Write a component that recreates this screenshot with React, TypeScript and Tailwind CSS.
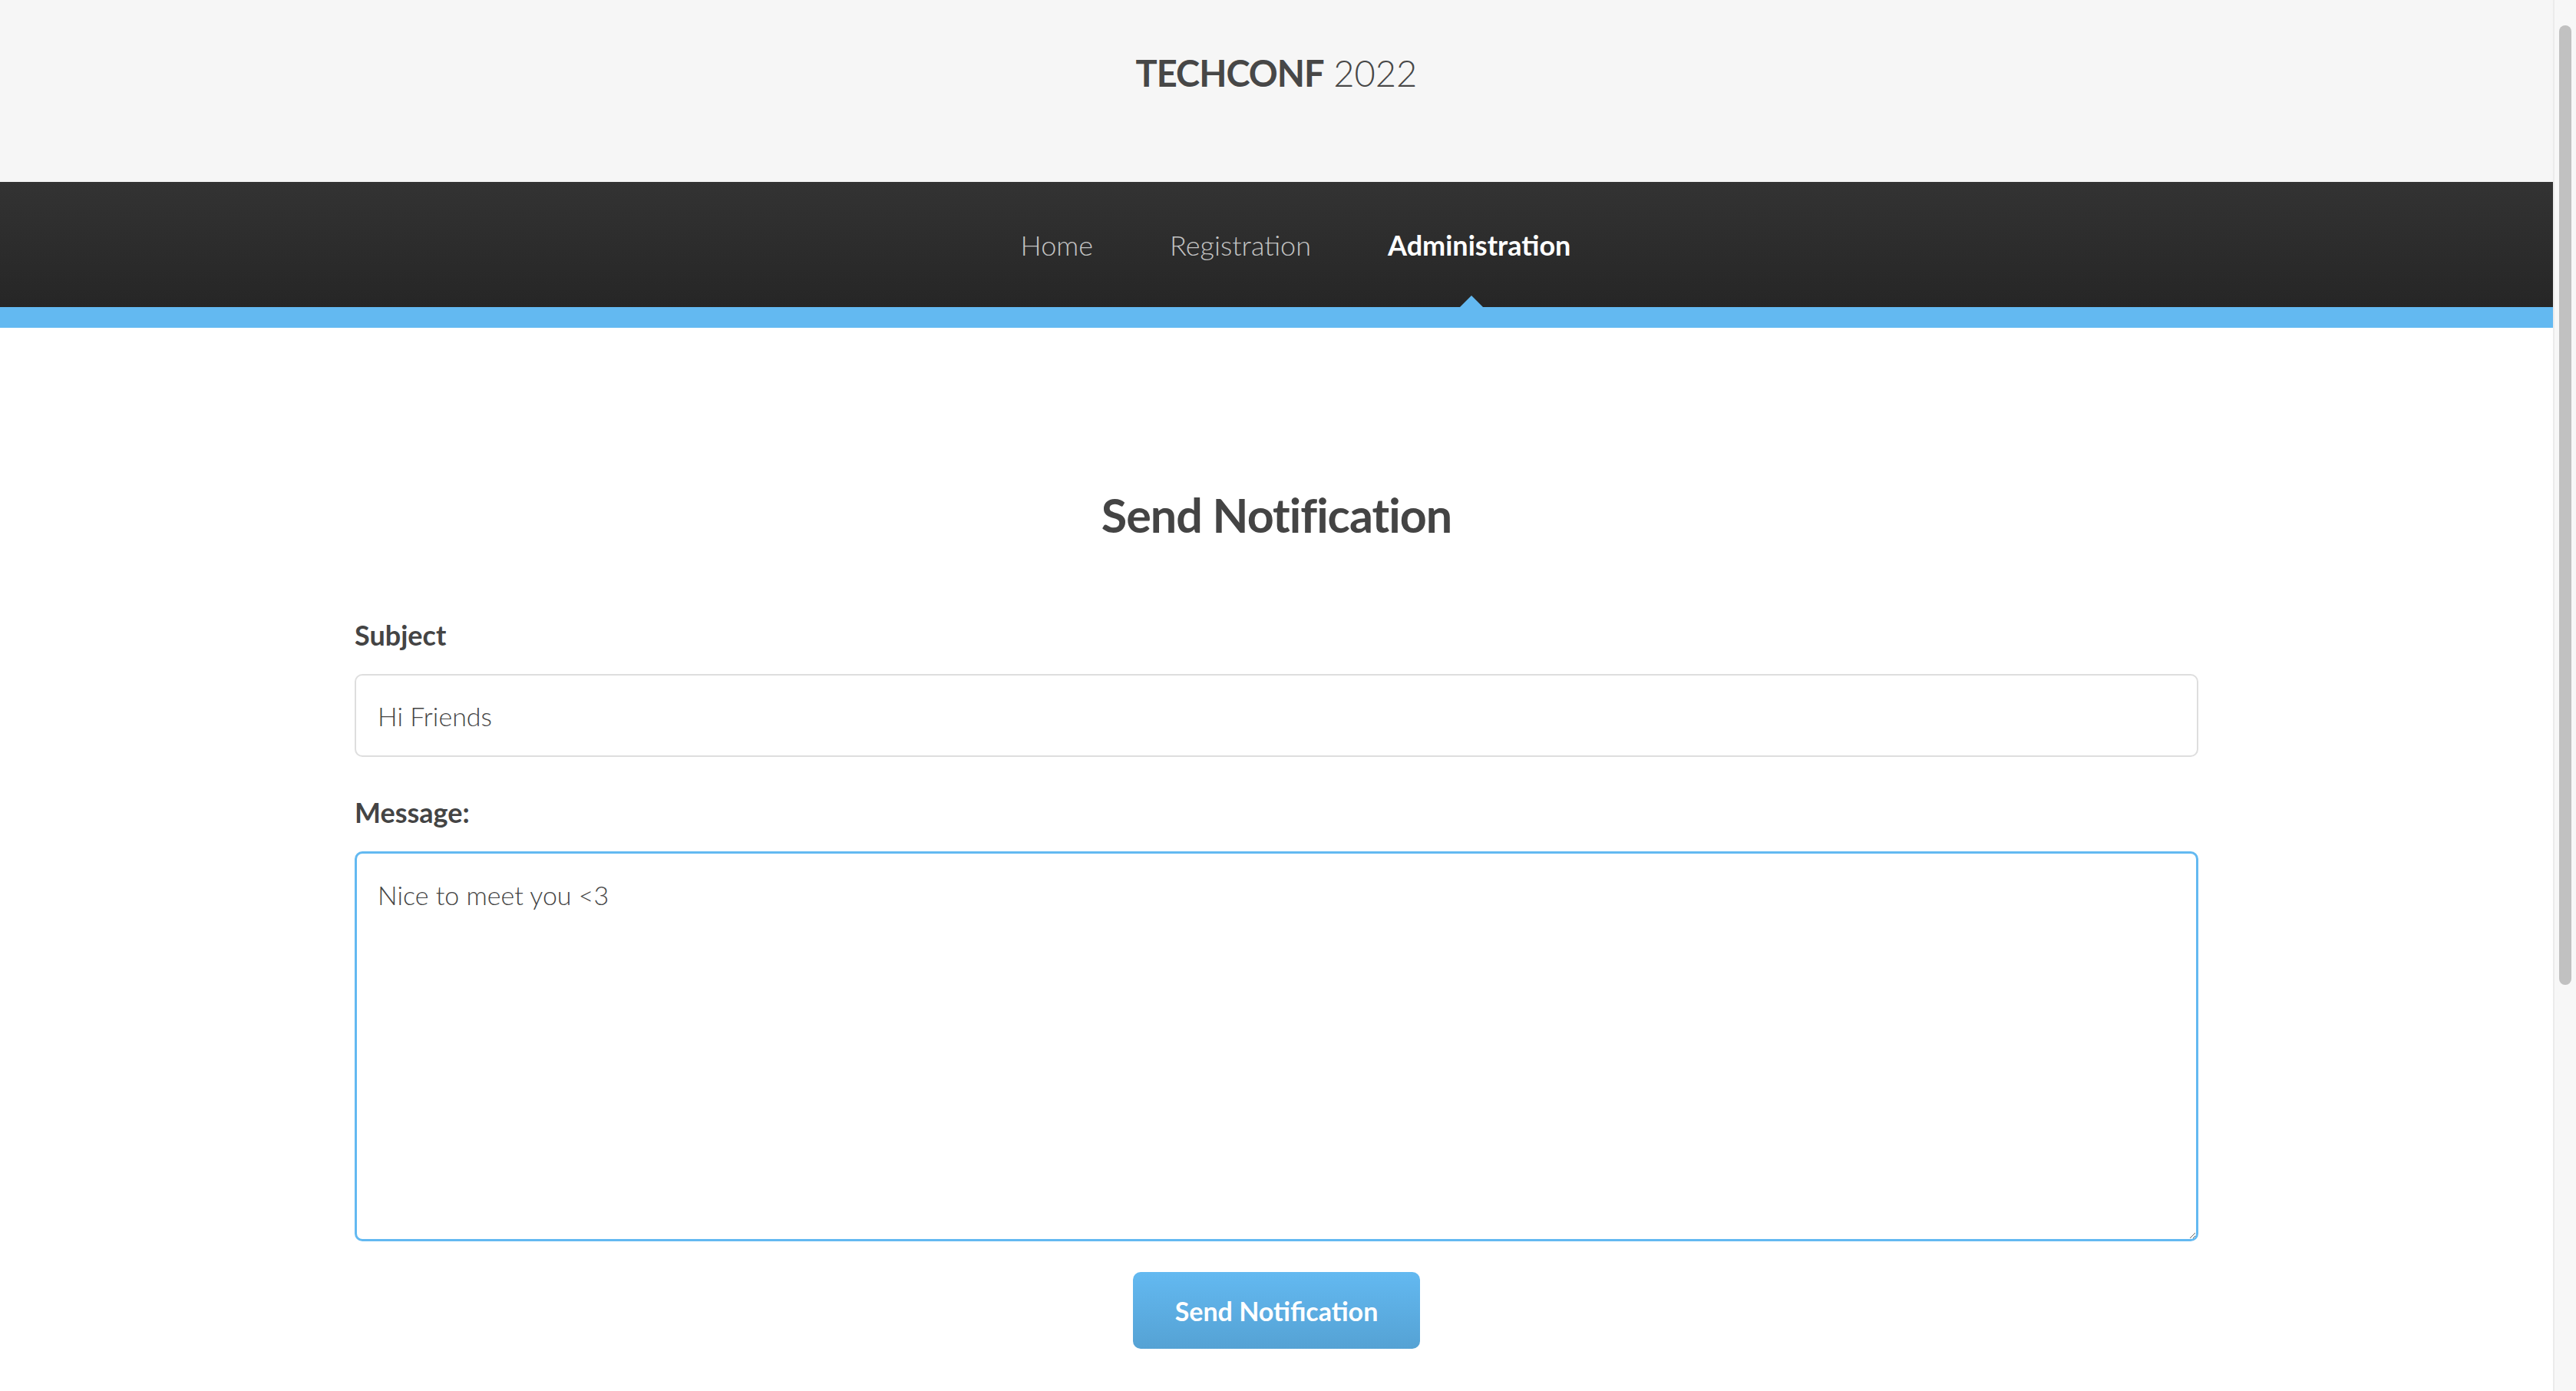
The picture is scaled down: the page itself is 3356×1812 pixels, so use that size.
import { useState } from "react";

const navItems = ["Home", "Registration", "Administration"];

const App = () => {
    const [subject, setSubject] = useState("Hi Friends");
    const [message, setMessage] = useState("Nice to meet you <3");

    return (
        <div className="flex h-[1812px] w-[3356px] overflow-hidden bg-white text-[#444] font-['Lato','Open_Sans',sans-serif]">
            <div className="flex flex-1 flex-col">
                {/* title bar */}
                <header className="flex h-[237px] items-center justify-center bg-[#f6f6f6] pb-[46px]">
                    <h1 className="text-[47px] leading-none text-[#474747]">
                        <span className="font-bold tracking-[-1px]">TECHCONF</span>
                        <span className="font-light"> 2022</span>
                    </h1>
                </header>

                {/* nav */}
                <nav className="relative h-[163px] bg-gradient-to-b from-[#333333] to-[#262626]">
                    <ul className="ml-[50px] flex h-full items-center justify-center">
                        {navItems.map((item) => (
                            <li key={item} className="relative flex h-full items-center px-[50px]">
                                <a
                                    href="#"
                                    className={
                                        item === "Administration"
                                            ? "text-[36px] font-bold text-white"
                                            : "text-[36px] font-light text-[#c4c4c4]"
                                    }
                                >
                                    {item}
                                </a>
                                {item === "Administration" && (
                                    <span className="absolute bottom-0 left-[calc(50%-10px)] h-0 w-0 -translate-x-1/2 border-x-[15px] border-b-[15px] border-x-transparent border-b-[#63b9f1]" />
                                )}
                            </li>
                        ))}
                    </ul>
                </nav>
                <div className="h-[27px] bg-[#63b9f1]" />

                {/* form */}
                <main className="mx-auto flex w-[2402px] flex-col pt-[213px]">
                    <h2 className="text-center text-[61px] font-bold leading-none tracking-[-1px] text-[#444]">
                        Send Notification
                    </h2>

                    <label className="mt-[108px] text-[36px] font-bold leading-none text-[#444]">Subject</label>
                    <input
                        value={subject}
                        onChange={(e) => setSubject(e.target.value)}
                        className="mt-[33px] h-[108px] rounded-[10px] border-2 border-[#dedede] bg-white px-[28px] text-[34px] font-light text-[#444] outline-none"
                    />

                    <label className="mt-[54px] text-[36px] font-bold leading-none text-[#444]">Message:</label>
                    <textarea
                        value={message}
                        onChange={(e) => setMessage(e.target.value)}
                        className="mt-[33px] h-[508px] resize-y rounded-[10px] border-[3px] border-[#63b9f1] bg-white px-[27px] py-[32px] text-[34px] font-light leading-[1.3] text-[#444] outline-none"
                    />

                    <div className="mt-[40px] flex justify-center">
                        <button className="h-[100px] w-[374px] rounded-[10px] bg-gradient-to-b from-[#63b9f1] to-[#55a2d4] text-[34px] font-bold text-white">
                            Send Notification
                        </button>
                    </div>
                </main>
            </div>

            {/* scrollbar */}
            <div className="flex w-[30px] shrink-0 justify-center border-l-2 border-[#ebebeb] bg-[#f7f7f7] pt-[33px]">
                <div className="h-[1250px] w-[16px] rounded-full bg-[#c1c1c1]" />
            </div>
        </div>
    );
};

export default App;
